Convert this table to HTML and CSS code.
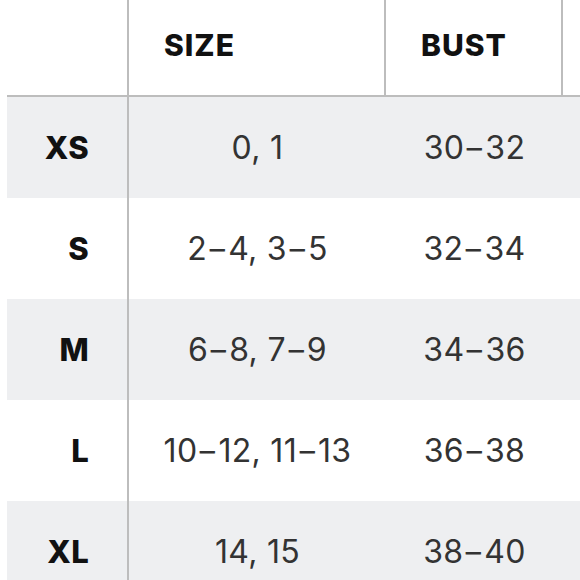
FILE: index.html
```html
<!DOCTYPE html>
<html lang="en">
<head>
<meta charset="utf-8">
<title>Size chart</title>
<link rel="stylesheet" href="styles.css">
</head>
<body>
<div class="chart">
  <div class="row head">
    <div class="cell label"></div>
    <div class="cell col2 hd">SIZE</div>
    <div class="cell col3 hd">BUST</div>
    <div class="cell col4"></div>
  </div>
  <div class="row shade">
    <div class="cell label">XS</div>
    <div class="cell col2">0, 1</div>
    <div class="cell col3">30<span class="d">-</span>32</div>
    <div class="cell col4"></div>
  </div>
  <div class="row">
    <div class="cell label">S</div>
    <div class="cell col2">2<span class="d">-</span>4, 3<span class="d">-</span>5</div>
    <div class="cell col3">32<span class="d">-</span>34</div>
    <div class="cell col4"></div>
  </div>
  <div class="row shade">
    <div class="cell label">M</div>
    <div class="cell col2">6<span class="d">-</span>8, 7<span class="d">-</span>9</div>
    <div class="cell col3">34<span class="d">-</span>36</div>
    <div class="cell col4"></div>
  </div>
  <div class="row">
    <div class="cell label">L</div>
    <div class="cell col2">10<span class="d">-</span>12, 11<span class="d">-</span>13</div>
    <div class="cell col3">36<span class="d">-</span>38</div>
    <div class="cell col4"></div>
  </div>
  <div class="row shade">
    <div class="cell label">XL</div>
    <div class="cell col2">14, 15</div>
    <div class="cell col3">38<span class="d">-</span>40</div>
    <div class="cell col4"></div>
  </div>
</div>
</body>
</html>
```
FILE: styles.css
```css
html, body {
  margin: 0;
  padding: 0;
  background: #ffffff;
  overflow: hidden;
}

.chart {
  margin-left: 7px;
  width: 573px;
  font-family: Inter, "Noto Sans", sans-serif;
  color: #333333;
}

.row {
  display: grid;
  grid-template-columns: 122px 257px 177px 1fr;
  height: 101px;
  align-items: stretch;
}

.row.shade {
  background: #eeeff1;
}

.row.head {
  height: 95px;
  border-bottom: 2px solid #bdbdbd;
}

.cell {
  display: flex;
  align-items: center;
  font-size: 32px;
  font-weight: 400;
  letter-spacing: 0.3px;
  white-space: pre;
}

.d {
  display: inline-block;
  margin: 0 3px;
  transform: scaleX(1.5);
}

.label {
  border-right: 2px solid #bdbdbd;
  justify-content: flex-end;
  padding-right: 38px;
  font-weight: 800;
  color: #111;
  font-size: 31px;
}

.col2, .col3 {
  justify-content: center;
}

.head .col2, .head .col3 {
  border-right: 2px solid #bdbdbd;
}

.hd {
  justify-content: flex-start;
  padding-left: 35px;
  padding-bottom: 6px;
  font-weight: 800;
  color: #111;
  font-size: 30px;
  letter-spacing: 1px;
}
```
